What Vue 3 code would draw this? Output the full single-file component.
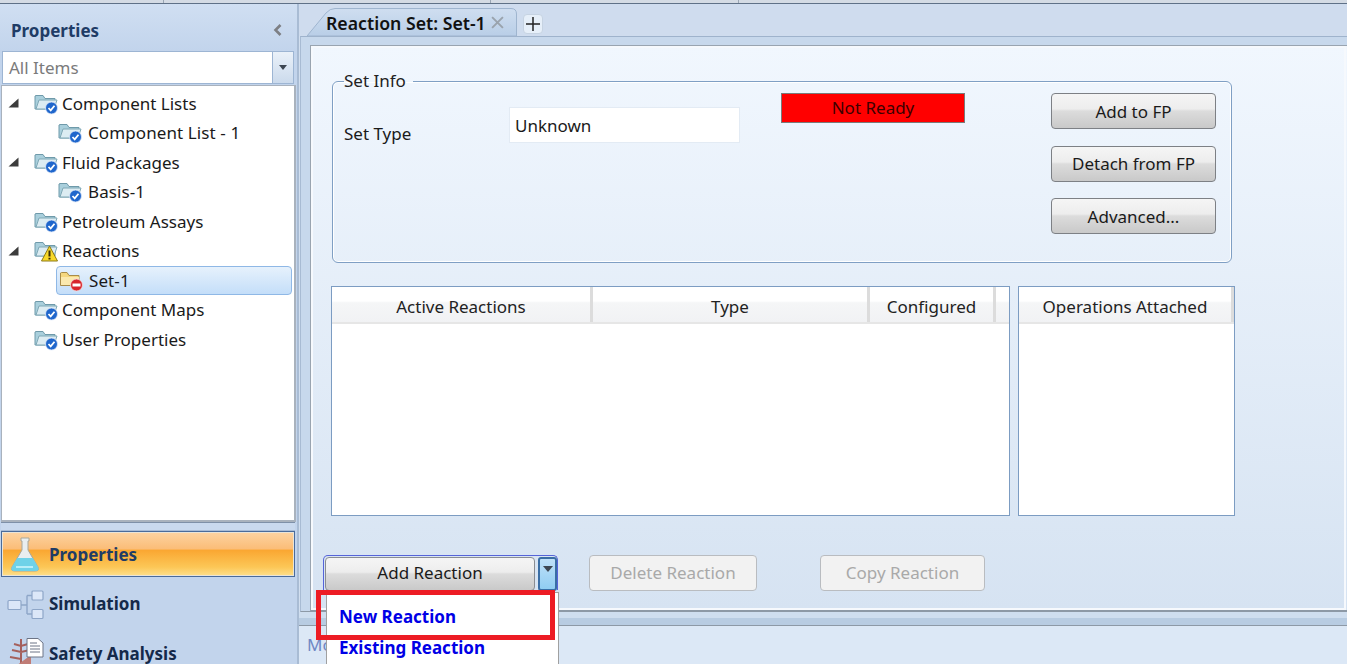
<script setup>
const tree = [
  { label: 'Component Lists', depth: 0, arrow: true, badge: 'check' },
  { label: 'Component List - 1', depth: 1, badge: 'check' },
  { label: 'Fluid Packages', depth: 0, arrow: true, badge: 'check' },
  { label: 'Basis-1', depth: 1, badge: 'check' },
  { label: 'Petroleum Assays', depth: 0, badge: 'check' },
  { label: 'Reactions', depth: 0, arrow: true, badge: 'warn' },
  { label: 'Set-1', depth: 1, badge: 'stop', selected: true },
  { label: 'Component Maps', depth: 0, badge: 'check' },
  { label: 'User Properties', depth: 0, badge: 'check' },
]
</script>

<template>
  <div class="root">
    <div class="topstrip"><i class="tick t1"></i><i class="tick t2"></i><i class="tick t3"></i></div>
    <div class="body">
      <aside class="side">
        <div class="side-head">
          <span class="side-title">Properties</span>
          <svg class="collapse" width="10" height="12" viewBox="0 0 10 12"><path d="M7.5 1 2.5 6l5 5" fill="none" stroke="#7d7f84" stroke-width="2.6"/></svg>
        </div>
        <div class="combo">
          <span class="combo-text">All Items</span>
          <span class="combo-btn"><i class="caret"></i></span>
        </div>
        <div class="tree">
          <div v-for="n in tree" :key="n.label" class="row" :class="['d' + n.depth, { sel: n.selected }]">
            <span class="exp"><svg v-if="n.arrow" width="11" height="10" viewBox="0 0 11 10"><path d="M10.5.5v9H.5z" fill="#3c3c3c"/></svg></span>
            <svg class="folder" width="26" height="24" viewBox="0 0 26 24">
              <template v-if="n.selected">
                <path d="M1.5 5V17.5H20V7.5H10L8 4.500H2.500z" fill="#f5d77f" stroke="#a88c4a"/>
                <path d="M2 9H20V17H2z" fill="#fbe9ae"/>
              </template>
              <template v-else>
                <path d="M1 5V18H21V7.500H11L9 4.500H2z" fill="#a9cfdc" stroke="#6f9aaa"/>
                <path d="M2 18 5 9H23L20 18z" fill="#dcecf2" stroke="#7fa8b6"/>
              </template>
              <template v-if="n.badge === 'check'">
                <circle cx="17.500" cy="17" r="6" fill="#1f66cc" stroke="#dfe9f7" stroke-width=".8"/>
                <path d="M14.500 17l2.200 2.300 3.800-4.600" fill="none" stroke="#fff" stroke-width="1.800"/>
              </template>
              <template v-if="n.badge === 'warn'">
                <path d="M15.500 8 23.500 23H7.500z" fill="#f8d92a" stroke="#8d7a18"/>
                <path d="M15.500 12.500V18.500M15.500 19.800V21.500" stroke="#3a2d05" stroke-width="2"/>
              </template>
              <template v-if="n.badge === 'stop'">
                <circle cx="17.500" cy="17" r="6" fill="#d8262c" stroke="#f4dcdc" stroke-width=".8"/>
                <path d="M13.500 15.500h8v3h-8z" fill="#fff"/>
              </template>
            </svg>
            <span class="row-text">{{ n.label }}</span>
          </div>
        </div>
        <div class="splitter"></div>
        <div class="nav active">
          <svg width="42" height="40" viewBox="0 0 42 40">
            <path d="M14 4H22V7H21V16L31 33Q33 37 28 37H8Q3 37 5 33L15 16V7H14z" fill="#e9eef0" stroke="#a8a89c"/>
            <path d="M10.300 24H25.700L31 33Q33 37 28 37H8Q3 37 5 33z" fill="#6fd2e8"/>
            <path d="M9 33H26" stroke="#b9eef8" stroke-width="2"/>
          </svg>
          <span>Properties</span>
        </div>
        <div class="nav sim">
          <svg width="42" height="38" viewBox="0 -6 42 38">
            <g fill="#dce7f8" stroke="#8ea6c8" stroke-width="1.200">
              <rect x="1" y="10.500" width="13" height="9" rx="1"/>
              <rect x="25" y="1" width="11" height="9" rx="1"/>
              <rect x="25" y="19.500" width="11" height="9" rx="1"/>
            </g>
            <path d="M14 15H20M20 5.500V24M20 5.500H25M20 24H25" fill="none" stroke="#8ea6c8" stroke-width="1.400"/>
          </svg>
          <span>Simulation</span>
        </div>
        <div class="nav safety">
          <svg width="42" height="34" viewBox="0 0 42 34">
            <path d="M14 2V34M7 7 14 9 21 7M5 13 14 15 23 13M3 20 14 22" fill="none" stroke="#a5605c" stroke-width="2"/>
            <path d="M2 34 24 18V34z" fill="#c07c76"/>
            <path d="M20 1.500H31L36 6V20H20z" fill="#fff" stroke="#6c7486"/>
            <path d="M23 6H30M23 9H33M23 12H33M23 15H33" stroke="#6c7486"/>
          </svg>
          <span>Safety Analysis</span>
        </div>
      </aside>

      <main class="main">
        <div class="tabstrip">
          <div class="tab">
            <svg class="tab-shape" width="210" height="28" viewBox="0 0 210 28">
              <defs>
                <linearGradient id="tabfill" x1="0" y1="0" x2="0" y2="1">
                  <stop offset="0" stop-color="#cfdef0"/>
                  <stop offset="1" stop-color="#b9cee7"/>
                </linearGradient>
              </defs>
              <path d="M0 28 19 5Q23 .5 28 .5H204Q209.500 .5 209.500 6V28z" fill="url(#tabfill)" stroke="#9fb5cf"/>
            </svg>
            <span class="tab-text">Reaction Set: Set-1</span>
            <svg class="tab-x" width="13" height="13" viewBox="0 0 12 12"><path d="M1 1 11 11M11 1 1 11" stroke="#9aa3ad" stroke-width="1.800"/></svg>
          </div>
          <div class="plus">
            <svg width="14" height="14" viewBox="0 0 14 14"><path d="M7 0V14M0 7H14" stroke="#222" stroke-width="1.500"/></svg>
          </div>
        </div>

        <section class="panel">
          <div class="inner">
            <fieldset class="info">
              <legend>Set Info</legend>
              <div class="info-grid">
                <label class="type-label">Set Type</label>
                <div class="type-input">Unknown</div>
                <div class="status">Not Ready</div>
                <div class="side-buttons">
                  <button class="btn">Add to FP</button>
                  <button class="btn">Detach from FP</button>
                  <button class="btn">Advanced...</button>
                </div>
              </div>
            </fieldset>

            <div class="tables">
              <div class="table t-main">
                <div class="thead">
                  <div class="th c1">Active Reactions</div>
                  <div class="th c2">Type</div>
                  <div class="th c3">Configured</div>
                  <div class="th c4"></div>
                </div>
              </div>
              <div class="table t-ops">
                <div class="thead">
                  <div class="th c5">Operations Attached</div>
                </div>
              </div>
            </div>

            <div class="actions">
              <div class="split">
                <button class="btn add">Add Reaction</button>
                <button class="drop"><i class="caret"></i></button>
              </div>
              <button class="btn off del">Delete Reaction</button>
              <button class="btn off copy">Copy Reaction</button>
            </div>
          </div>
        </section>

        <div class="sash"></div>
        <div class="lower"><span class="mo">Mo</span></div>
        <div class="baseline"></div>
      </main>
    </div>

    <div class="menu">
      <div class="mi">New Reaction</div>
      <div class="mi">Existing Reaction</div>
    </div>
    <div class="annot"></div>
  </div>
</template>

<style>
html, body { margin: 0; background: #c5d6ec; }
</style>

<style scoped>
* { box-sizing: border-box; }
.root {
  position: relative; width: 1347px; height: 664px; overflow: hidden;
  display: flex; flex-direction: column;
  font-family: "Noto Sans", "Open Sans", sans-serif; font-size: 17px; color: #1a1a1a;
  background: #c5d6ec;
}
.topstrip { height: 4px; flex: none; background: #d4dbe4; border-bottom: 1px solid #5f7187; position: relative; }
.tick { position: absolute; top: 0; width: 1px; height: 3px; background: #9aa6b4; }
.t1 { left: 163px; } .t2 { left: 490px; } .t3 { left: 738px; }
.body { flex: 1; display: flex; min-height: 0; }

.side { width: 299px; flex: none; background: #c2d4ec; border-right: 2px solid #a9bcd4; display: flex; flex-direction: column; padding-left: 1px; }
.side-head { height: 47px; flex: none; display: flex; align-items: center; justify-content: space-between; padding: 5px 14px 0 10px; background: linear-gradient(#d0dff2, #c2d4ec); margin-left: -1px; }
.side-title { font-weight: 700; font-size: 17px; color: #1f3c66; padding-left: 1px; }
.collapse { margin-top: -1px; }
.combo { height: 33px; width: 292px; margin-left: 1px; flex: none; display: flex; background: #fff; border: 1px solid #9db5d3; }
.combo-text { flex: 1; padding-left: 6px; line-height: 31px; color: #7b7b7b; font-size: 17px; }
.combo-btn { width: 21px; background: linear-gradient(#eaf1f9, #cbdaec); border-left: 1px solid #9db5d3; display: flex; align-items: center; justify-content: center; }
.caret { display: block; width: 0; height: 0; border-left: 4px solid transparent; border-right: 4px solid transparent; border-top: 5px solid #3d4652; }
.tree { height: 437px; width: 295px; margin-top: 1px; flex: none; background: #fff; border: 1px solid #a9b2bd; border-right-width: 2px; border-bottom-width: 2px; padding-top: 2.500px; }
.row { height: 29.500px; display: flex; align-items: center; padding-left: 6px; }
.exp { width: 26px; flex: none; display: flex; align-items: center; }
.d1 { padding-left: 30px; }
.folder { flex: none; margin-top: -1px; }
.row-text { padding-left: 2px; white-space: nowrap; }
.d1 .row-text { padding-left: 4px; letter-spacing: .1px; }
.d1.sel { margin-left: 54px; margin-right: 2px; padding-left: 2px; background: linear-gradient(#e6f1fc, #c4def9); border: 1px solid #8fb8e6; border-radius: 4px; }
.d1.sel .exp { display: none; }
.splitter { height: 9px; flex: none; background: #c9d9ee; margin: 0 2px 0 0; border-bottom: 1px solid #a7bbd6; box-shadow: inset 0 1px 0 #7e90a8; }
.nav { display: flex; align-items: center; flex: none; font-weight: 700; font-size: 17px; color: #15294a; padding-left: 6px; margin-right: 2px; }
.nav svg { flex: none; }
.nav.active { height: 46px; border: 1px solid #4a6b9a; background: linear-gradient(#fcd3a2 0, #fbbd78 38%, #faa732 42%, #fcc757 80%, #fee08c 100%); box-shadow: inset 0 0 0 1px #e9e4d8; padding-left: 5px; color: #1f3c66; }
.nav.sim { height: 50px; padding-top: 2px; }
.nav.safety { height: 50px; padding-top: 3px; }

.main { flex: 1; min-width: 0; display: flex; flex-direction: column; background: #d2dfef; }
.tabstrip { height: 32px; flex: none; display: flex; align-items: flex-end; padding-left: 8px; background: #cfdcee; }
.tab { position: relative; width: 210px; height: 28px; display: flex; align-items: center; padding: 1px 0 0 19px; gap: 5px; }
.tab-shape { position: absolute; left: 0; top: 0; }
.tab-text, .tab-x { position: relative; }
.tab-text { font-weight: 600; font-size: 17.700px; color: #111; white-space: nowrap; }
.plus { width: 20px; height: 20px; margin: 0 0 2px 6px; background: #e6eff9; border: 1px solid #c6d3e2; border-radius: 4px; display: flex; align-items: center; justify-content: center; }
.panel { height: 576px; flex: none; padding: 8px 0 0 9px; background: #c7d8ec; border-top: 1px solid #9fb3cc; margin-left: 1px; border-left: 1px solid #a8bbd3; border-bottom: 1px solid #8d99a6; }
.inner { height: 100%; background: linear-gradient(#f1f7fe, #d6e3f2 100%); border: 1px solid #99a4b0; border-right: none; border-bottom-color: #8d99a6; outline: 2px solid #f6f9fd; outline-offset: -3px; }
.info { width: 900px; height: 194px; margin: 23px 0 0 21px; padding: 0 0 0 11px; border: 1px solid #7f9fc4; border-radius: 6px; box-shadow: inset 0 0 0 1px #fff; min-inline-size: 0; }
.info legend { padding: 0 7px 0 0; margin: 0; font-size: 17px; line-height: 24px; color: #222; }
.info-grid { display: grid; grid-template-columns: 165px 231px 225px 251px; }
.type-label { padding-top: 29px; line-height: 24px; }
.type-input { margin-top: 14px; height: 36px; background: #fff; border: 1px solid #e3ebf4; padding-left: 5px; line-height: 35px; }
.status { margin-left: 41px; width: 184px; height: 30px; background: #ff0000; border: 1px solid #7a7a7a; text-align: center; line-height: 28px; color: #3c0000; }
.side-buttons { display: flex; flex-direction: column; gap: 16.500px; justify-self: end; width: 165px; }
.btn { display: block; height: 36px; width: 165px; font: inherit; color: #1a1a1a; border: 1px solid #7d8085; border-radius: 4px; background: linear-gradient(#f5f5f5 0, #ededed 44%, #dcdcdc 50%, #c9c9c9 100%); padding: 0; }
.tables { display: flex; gap: 8px; margin: 23px 0 0 20px; }
.table { height: 230px; background: #fff; border: 1px solid #7c9cc2; }
.t-main { width: 679px; }
.t-ops { width: 217px; }
.thead { display: flex; height: 37px; border-bottom: 2px solid #e6e6e6; background: linear-gradient(#fff 0, #fff 40%, #f5f6f7 45%, #f1f2f4 100%); }
.th { text-align: center; line-height: 40px; border-right: 3px solid #dcdcdc; height: 35px; color: #222; }
.c1 { width: 261px; } .c2 { width: 277px; } .c3 { width: 126px; } .c4 { width: 13px; border-right: none; }
.c5 { width: 215px; }
.actions { display: flex; align-items: flex-start; margin: 39px 0 0 12px; }
.split { width: 235px; height: 35px; display: flex; gap: 3px; border: 1px solid #5664d8; border-bottom: none; border-radius: 5px 5px 0 0; padding: 1px 0 0 1px; }
.btn.add { width: 210px; height: 34px; border-color: #8a8d92; padding-bottom: 3px; }
.drop { width: 19px; height: 34px; border: 2px solid #3a6ea5; border-radius: 3px; padding: 7px 0 0; background: linear-gradient(#bfe0f8, #90cdf2); display: flex; justify-content: center; }
.drop .caret { border-left-width: 5px; border-right-width: 5px; border-top-width: 6px; }
.btn.off { color: #a9a9a9; background: #f2f2f2; border-color: #b9bcc0; padding-bottom: 2px; }
.del { margin-left: 31px; width: 168px; }
.copy { margin-left: 63px; width: 165px; }
.sash { height: 14px; flex: none; background: #b8cce2; border-top: 6px solid #cfdeef; border-bottom: 1px solid #8d99a6; }
.lower { flex: 1; background: #dce8f6; padding-left: 8px; }
.mo { color: #6f87c4; font-size: 17px; line-height: 38px; }
.baseline { height: 4px; flex: none; border-top: 1px solid #6e7680; background: #dfe3e8; }

.menu { position: absolute; left: 326px; top: 592px; width: 233px; height: 72px; background: #fff; border: 1px solid #a0a0a0; border-bottom: none; padding: 8px 0 0 12px; }
.mi { font-weight: 700; font-size: 17px; color: #0000e6; line-height: 31px; height: 31px; }
.annot { position: absolute; left: 316px; top: 590px; width: 239px; height: 50px; border: 5px solid #ed1c24; }
</style>
